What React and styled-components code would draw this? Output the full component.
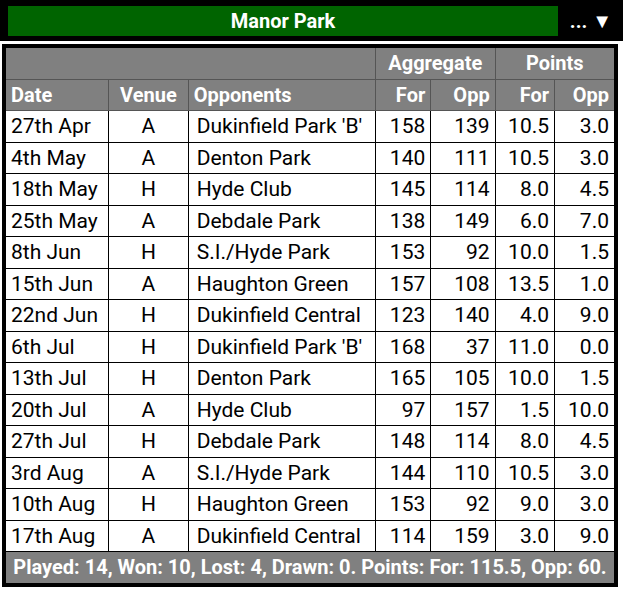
import React from "react";
import styled, { createGlobalStyle } from "styled-components";

const GlobalStyle = createGlobalStyle`
  body {
    margin: 0;
    background: #fff;
    font-family: Roboto, "Liberation Sans", sans-serif;
  }
`;

const TopBar = styled.div`
  background: #000;
  height: 41px;
  display: flex;
  align-items: center;
  padding: 0 11px 0 8px;
  box-sizing: border-box;
`;

const Title = styled.div`
  flex: 0 0 550px;
  height: 30px;
  background: #006400;
  color: #fff;
  font-weight: bold;
  font-size: 20px;
  display: flex;
  align-items: center;
  justify-content: center;
`;

const Menu = styled.div`
  flex: 1;
  color: #fff;
  font-weight: bold;
  font-size: 20px;
  text-align: right;
`;

const Table = styled.table`
  margin: 3px 5px 0 2px;
  width: 616px;
  table-layout: fixed;
  border-collapse: collapse;
  border: 4px solid #000;
  font-size: 21px;
`;

const Head = styled.th`
  background: #808080;
  color: #fff;
  font-weight: bold;
  font-size: 20px;
  height: 30.5px;
  padding: 0 5px;
  border: 1px solid #555;
  text-align: ${(p) => p.align || "left"};
`;

const Cell = styled.td`
  height: 30.5px;
  padding: 0 ${(p) => (p.pad ? p.pad : 5)}px;
  border: 1px solid #000;
  color: #000;
  white-space: nowrap;
  text-align: ${(p) => p.align || "left"};
`;

const Footer = styled.td`
  background: #808080;
  color: #fff;
  font-weight: bold;
  font-size: 20px;
  height: 30.5px;
  text-align: center;
  padding: 0;
  white-space: nowrap;
`;

const Rule = styled.div`
  margin-top: 2px;
  border-top: 1px solid #000;
`;

const fixtures = [
  ["27th Apr", "A", "Dukinfield Park 'B'", 158, 139, "10.5", "3.0"],
  ["4th May", "A", "Denton Park", 140, 111, "10.5", "3.0"],
  ["18th May", "H", "Hyde Club", 145, 114, "8.0", "4.5"],
  ["25th May", "A", "Debdale Park", 138, 149, "6.0", "7.0"],
  ["8th Jun", "H", "S.I./Hyde Park", 153, 92, "10.0", "1.5"],
  ["15th Jun", "A", "Haughton Green", 157, 108, "13.5", "1.0"],
  ["22nd Jun", "H", "Dukinfield Central", 123, 140, "4.0", "9.0"],
  ["6th Jul", "H", "Dukinfield Park 'B'", 168, 37, "11.0", "0.0"],
  ["13th Jul", "H", "Denton Park", 165, 105, "10.0", "1.5"],
  ["20th Jul", "A", "Hyde Club", 97, 157, "1.5", "10.0"],
  ["27th Jul", "H", "Debdale Park", 148, 114, "8.0", "4.5"],
  ["3rd Aug", "A", "S.I./Hyde Park", 144, 110, "10.5", "3.0"],
  ["10th Aug", "H", "Haughton Green", 153, 92, "9.0", "3.0"],
  ["17th Aug", "A", "Dukinfield Central", 114, 159, "3.0", "9.0"],
];

export default function App() {
  return (
    <>
      <GlobalStyle />
      <TopBar>
        <Title>Manor Park</Title>
        <Menu>... ▼</Menu>
      </TopBar>
      <Table>
        <colgroup>
          <col style={{ width: 104 }} />
          <col style={{ width: 79 }} />
          <col style={{ width: 186 }} />
          <col style={{ width: 55 }} />
          <col style={{ width: 64 }} />
          <col style={{ width: 59 }} />
          <col style={{ width: 61 }} />
        </colgroup>
        <thead>
          <tr>
            <Head colSpan={3}></Head>
            <Head colSpan={2} align="center">Aggregate</Head>
            <Head colSpan={2} align="center">Points</Head>
          </tr>
          <tr>
            <Head>Date</Head>
            <Head align="center">Venue</Head>
            <Head>Opponents</Head>
            <Head align="right">For</Head>
            <Head align="right">Opp</Head>
            <Head align="right">For</Head>
            <Head align="right">Opp</Head>
          </tr>
        </thead>
        <tbody>
          {fixtures.map((f) => (
            <tr key={f[0]}>
              <Cell>{f[0]}</Cell>
              <Cell align="center">{f[1]}</Cell>
              <Cell pad={8}>{f[2]}</Cell>
              <Cell align="right">{f[3]}</Cell>
              <Cell align="right">{f[4]}</Cell>
              <Cell align="right">{f[5]}</Cell>
              <Cell align="right">{f[6]}</Cell>
            </tr>
          ))}
        </tbody>
        <tfoot>
          <tr>
            <Footer colSpan={7}>
              Played: 14, Won: 10, Lost: 4, Drawn: 0. Points: For: 115.5, Opp: 60.
            </Footer>
          </tr>
        </tfoot>
      </Table>
      <Rule />
    </>
  );
}
